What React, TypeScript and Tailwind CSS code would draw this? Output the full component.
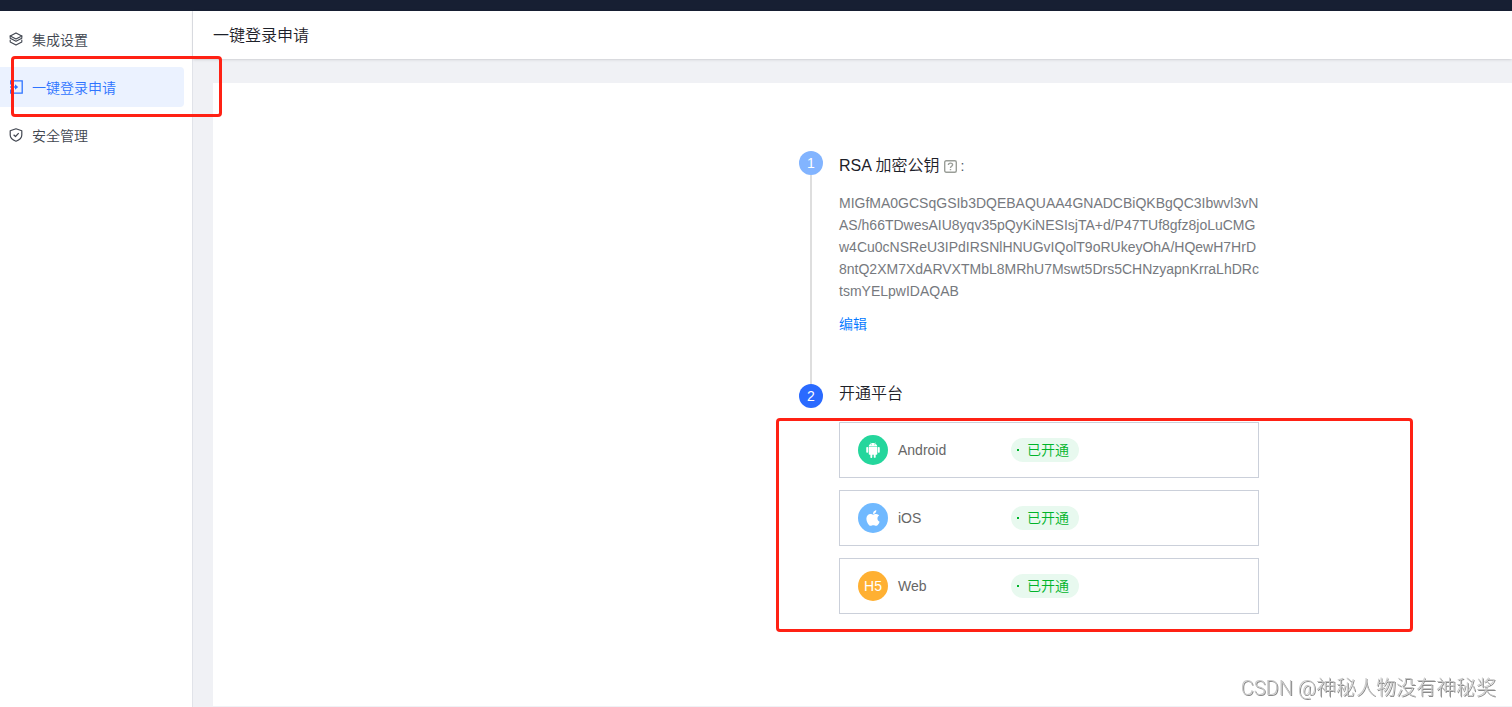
import type { ReactNode } from 'react';
import { AiFillAndroid } from 'react-icons/ai';
import { FaApple } from 'react-icons/fa';

interface NavItem {
  label: string;
  icon: ReactNode;
  active?: boolean;
}

interface Platform {
  name: string;
  icon: ReactNode;
  color: string;
}

const RSA_KEY =
  'MIGfMA0GCSqGSIb3DQEBAQUAA4GNADCBiQKBgQC3Ibwvl3vNAS/h66TDwesAIU8yqv35pQyKiNESIsjTA+d/P47TUf8gfz8joLuCMGw4Cu0cNSReU3IPdIRSNlHNUGvIQolT9oRUkeyOhA/HQewH7HrD8ntQ2XM7XdARVXTMbL8MRhU7Mswt5Drs5CHNzyapnKrraLhDRctsmYELpwIDAQAB';

function LayersIcon() {
  return (
    <svg width="14" height="14" viewBox="0 0 14 14" fill="none" stroke="currentColor" strokeWidth="1.1" strokeLinejoin="round" strokeLinecap="round">
      <path d="M7 .9 12.800 3.900 7 6.900 1.200 3.900Z" />
      <path d="M1.200 3.900v2.400L7 9.300l5.800-3V3.900" />
      <path d="M1.200 8v2L7 13.100l5.800-3.100V8" />
    </svg>
  );
}

function LoginIcon() {
  return (
    <svg width="14" height="14" viewBox="0 0 14 14" fill="none" stroke="currentColor" strokeWidth="1.3">
      <path d="M1.700 4.500V.8h11.500v12.400H1.700V9.500" />
      <path d="M1 7h6" />
      <path d="M6 4.200 9.200 7 6 9.800Z" fill="currentColor" stroke="none" />
    </svg>
  );
}

function ShieldIcon() {
  return (
    <svg width="14" height="14" viewBox="0 0 14 14" fill="none" stroke="currentColor" strokeWidth="1.2" strokeLinejoin="round">
      <path d="M7 .8 12.800 2.700v4.300c0 3-2.400 4.900-5.800 6.200C3.600 11.900 1.200 10 1.200 7V2.700Z" />
      <path d="M4.600 6.700 6.500 8.500l3.200-3.300" />
    </svg>
  );
}

function HelpIcon() {
  return (
    <svg width="13" height="13" viewBox="0 0 13 13" fill="none" stroke="currentColor" strokeWidth="1.4">
      <rect x="0.700" y="0.700" width="11.600" height="11.600" rx="1.500" />
      <path d="M4.400 5c0-2.500 4.200-2.500 4.200-.2 0 1.500-2.100 1.500-2.100 3.200M6.500 8.900v1.400" />
    </svg>
  );
}

const NAV_ITEMS: NavItem[] = [
  { label: '集成设置', icon: <LayersIcon /> },
  { label: '一键登录申请', icon: <LoginIcon />, active: true },
  { label: '安全管理', icon: <ShieldIcon /> },
];

const PLATFORMS: Platform[] = [
  { name: 'Android', icon: <AiFillAndroid size={18} />, color: 'bg-[#24d69c]' },
  { name: 'iOS', icon: <FaApple size={18} />, color: 'bg-[#70b9ff]' },
  { name: 'Web', icon: 'H5', color: 'bg-[#ffb032]' },
];

function Highlight({ className }: { className: string }) {
  return <div className={`pointer-events-none absolute z-10 rounded-sm border-3 border-[#ff2114] ${className}`} />;
}

function StatusTag() {
  return (
    <span className="flex h-6 items-center gap-2 rounded-full bg-[#e8f9ef] pl-[6px] pr-[10px] text-[#00b42a]">
      <span className="size-[2px] bg-[#00b42a]" />
      已开通
    </span>
  );
}

export default function App() {
  return (
    <div className="flex min-h-screen flex-col bg-white font-['Liberation_Sans','Noto_Sans_CJK_SC',sans-serif] text-sm font-[350] text-[#4e5969]">
      <div className="h-[11px] bg-[#171f33]" />

      <div className="flex flex-1">
        {/* Sidebar */}
        <aside className="w-[193px] shrink-0 border-r border-[#e1e3e9] pr-2 pt-2">
          <nav className="flex flex-col gap-2">
            {NAV_ITEMS.map(item => (
              <div key={item.label} className="relative">
                <a
                  href="#"
                  className={`flex h-10 items-center gap-[9px] rounded-r pl-[9px] ${
                    item.active ? 'bg-[#ebf2ff] text-[#2e74ff]' : 'text-[#414650]'
                  }`}
                >
                  {item.icon}
                  <span className="pt-[2px]">{item.label}</span>
                </a>
                {item.active && <Highlight className="-bottom-[10px] -right-[38px] -top-[11px] left-[11px]" />}
              </div>
            ))}
          </nav>
        </aside>

        <div className="flex min-w-0 flex-1 flex-col bg-[#f0f1f5]">
          <header className="flex h-12 items-center bg-white px-5 pt-[2px] shadow-sm">
            <h1 className="text-base text-[#1d2129]">一键登录申请</h1>
          </header>

          {/* Application steps */}
          <main className="mb-px ml-5 mt-6 flex flex-1 justify-end bg-white pr-[253px] pt-[68px]">
            <ol className="w-[460px]">
              <li className="flex gap-4">
                <div className="flex flex-col items-center">
                  <span className="flex size-6 items-center justify-center rounded-full bg-[#82b4ff] text-white">1</span>
                  <span className="w-[2px] flex-1 bg-[#dedede]" />
                </div>
                <div className="min-w-0 flex-1 pb-[49px] pt-[3px]">
                  <h2 className="flex h-6 items-center gap-[5px] text-base text-[#1d2129]">
                    RSA 加密公钥
                    <span className="flex items-center gap-[3px] text-sm text-[#9a9e98]">
                      <HelpIcon />
                      <span className="text-[#4e5969]">:</span>
                    </span>
                  </h2>
                  <p className="mt-[14px] break-all leading-[22px] text-[#76797e]">{RSA_KEY}</p>
                  <button className="mt-[11px] block leading-[22px] text-[#0077ff]">编辑</button>
                </div>
              </li>

              <li className="flex gap-4">
                <span className="flex size-6 items-center justify-center rounded-full bg-[#2a6aff] text-white">2</span>
                <div className="flex-1">
                  <h2 className="h-[38px] text-base leading-5 text-[#1d2129]">开通平台</h2>
                  <div className="relative">
                    <Highlight className="-bottom-[18px] -left-[63px] -right-[154px] -top-1" />
                    <ul className="flex flex-col gap-3">
                      {PLATFORMS.map(platform => (
                        <li key={platform.name} className="flex h-14 items-center border border-[#cbd0da] pl-[18px] text-[#666666]">
                          <span className={`flex size-[30px] items-center justify-center rounded-full text-white ${platform.color}`}>
                            {platform.icon}
                          </span>
                          <span className="ml-[10px] w-[113px]">{platform.name}</span>
                          <StatusTag />
                        </li>
                      ))}
                    </ul>
                  </div>
                </div>
              </li>
            </ol>
          </main>
        </div>
      </div>

      <div className="fixed bottom-[5px] right-4 font-['Roboto','Noto_Sans_CJK_SC',sans-serif] text-xl font-light text-[#c8c8c8] [text-shadow:1px_1px_0_#8a8a8a]">
        CSDN @神秘人物没有神秘奖
      </div>
    </div>
  );
}
